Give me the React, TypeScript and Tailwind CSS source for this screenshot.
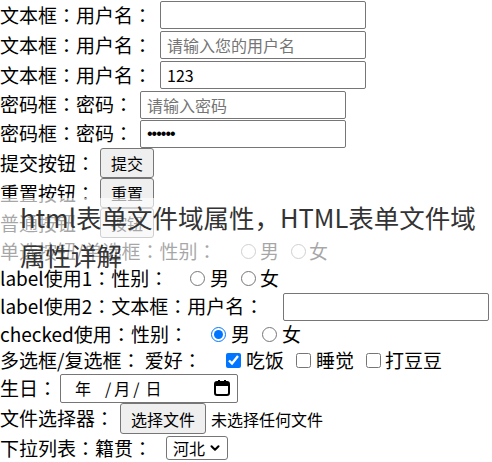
import { ChevronDown } from 'lucide-react';

const fontStack = '"Noto Sans CJK SC", "Noto Sans", sans-serif';

// full-width colon drawn centred, as in the reference font
function Label({ text, className }: { text: string; className: string }) {
  const parts = text.split('：');
  return (
    <span className={className}>
      {parts.map((p, i) => (
        <span key={i}>
          {p}
          {i < parts.length - 1 && <span style={{ fontFamily: '"Noto Sans CJK JP", sans-serif' }}>：</span>}
        </span>
      ))}
    </span>
  );
}

function CalendarIcon() {
  return (
    <svg width="18" height="18" viewBox="0 0 18 18" fill="none">
      <rect x="2" y="3" width="14" height="13" rx="2" stroke="#000" strokeWidth="2" />
      <rect x="2" y="3" width="14" height="4" fill="#000" />
      <rect x="5" y="1" width="2" height="3" fill="#000" />
      <rect x="11" y="1" width="2" height="3" fill="#000" />
    </svg>
  );
}

function Radio({ checked }: { checked?: boolean }) {
  return <input type="radio" defaultChecked={checked} className="m-0 h-[15px] w-[15px] shrink-0" />;
}

function Checkbox({ checked }: { checked?: boolean }) {
  return <input type="checkbox" defaultChecked={checked} className="m-0 h-[15px] w-[15px] shrink-0" />;
}

export default function App() {
  const textInput =
    'h-[28px] w-[206px] shrink-0 rounded-[2px] border border-[#767676] bg-white px-[6px] text-[16px] text-black outline-none placeholder:text-[#757575]';
  const button =
    'h-[30px] shrink-0 rounded-[3px] border border-[#767676] bg-[#efefef] px-[10px] text-[16px] text-black';

  return (
    <div
      className="relative h-[462px] w-[492px] overflow-hidden bg-white text-[19px] text-black"
      style={{ fontFamily: fontStack }}
    >
      {/* 文本框 */}
      <div className="flex h-[30px] items-center whitespace-nowrap">
        <Label className="w-[160px] shrink-0" text="文本框：用户名：" />
        <input type="text" className={textInput} />
      </div>
      <div className="flex h-[30px] items-center whitespace-nowrap">
        <Label className="w-[160px] shrink-0" text="文本框：用户名：" />
        <input type="text" placeholder="请输入您的用户名" className={textInput} />
      </div>
      <div className="flex h-[30px] items-center whitespace-nowrap">
        <Label className="w-[160px] shrink-0" text="文本框：用户名：" />
        <input type="text" defaultValue="123" className={textInput} />
      </div>

      {/* 密码框 */}
      <div className="flex h-[29px] items-center whitespace-nowrap">
        <Label className="w-[140px] shrink-0" text="密码框：密码：" />
        <input type="password" placeholder="请输入密码" className={textInput} />
      </div>
      <div className="flex h-[29px] items-center whitespace-nowrap">
        <Label className="w-[140px] shrink-0" text="密码框：密码：" />
        <input
          type="password"
          defaultValue="123456"
          className={textInput + ' font-["Liberation_Sans"] text-[15px] tracking-[-1px]'}
        />
      </div>

      {/* 按钮 */}
      <div className="flex h-[30px] items-center whitespace-nowrap">
        <Label className="w-[100px] shrink-0" text="提交按钮：" />
        <button className={button}>提交</button>
      </div>
      <div className="flex h-[30px] items-center whitespace-nowrap">
        <Label className="w-[100px] shrink-0" text="重置按钮：" />
        <button className={button}>重置</button>
      </div>
      <div className="flex h-[30px] items-center whitespace-nowrap">
        <Label className="w-[100px] shrink-0" text="普通按钮：" />
        <button className={button}>按钮</button>
      </div>

      {/* 单选 */}
      <div className="flex h-[27px] items-center whitespace-nowrap">
        <Label className="w-[241px] shrink-0" text="单选按钮/单选框：性别：" />
        <Radio />
        <span className="ml-[4px]">男</span>
        <span className="ml-[12px] flex items-center"><Radio /></span>
        <span className="ml-[3px]">女</span>
      </div>
      <div className="flex h-[27px] items-center whitespace-nowrap">
        <Label className="w-[190px] shrink-0" text="label使用1：性别：" />
        <Radio />
        <span className="ml-[5px]">男</span>
        <span className="ml-[12px] flex items-center"><Radio /></span>
        <span className="ml-[4px]">女</span>
      </div>
      <div className="flex h-[29px] items-center whitespace-nowrap">
        <Label className="w-[283px] shrink-0" text="label使用2：文本框：用户名：" />
        <input type="text" className={textInput + ' h-[27px]'} />
      </div>
      <div className="flex h-[27px] items-center whitespace-nowrap">
        <Label className="w-[211px] shrink-0" text="checked使用：性别：" />
        <Radio checked />
        <span className="ml-[5px]">男</span>
        <span className="ml-[12px] flex items-center"><Radio /></span>
        <span className="ml-[5px]">女</span>
      </div>

      {/* 复选框 */}
      <div className="flex h-[25px] items-center whitespace-nowrap">
        <Label className="w-[226px] shrink-0" text="多选框/复选框： 爱好：" />
        <Checkbox checked />
        <span className="ml-[5px]">吃饭</span>
        <span className="ml-[12px] flex items-center"><Checkbox /></span>
        <span className="ml-[5px]">睡觉</span>
        <span className="ml-[12px] flex items-center"><Checkbox /></span>
        <span className="ml-[4px]">打豆豆</span>
      </div>

      {/* 日期 */}
      <div className="flex h-[30px] items-center whitespace-nowrap">
        <Label className="w-[60px] shrink-0" text="生日：" />
        <div className="flex h-[29px] w-[178px] items-center rounded-[2px] border border-[#767676] pl-[14px] pr-[6px] text-[16px]">
          <span>年</span>
          <span className="ml-[14px]">/</span>
          <span className="ml-[3px]">月</span>
          <span className="ml-[3px]">/</span>
          <span className="ml-[6px]">日</span>
          <span className="ml-auto flex items-center">
            <CalendarIcon />
          </span>
        </div>
      </div>

      {/* 文件 */}
      <div className="flex h-[31px] items-center whitespace-nowrap">
        <Label className="w-[120px] shrink-0" text="文件选择器：" />
        <button className={button + ' h-[31px] px-[9px]'}>选择文件</button>
        <span className="ml-[5px] text-[16px]">未选择任何文件</span>
      </div>

      {/* 下拉列表 */}
      <div className="flex h-[28px] items-center whitespace-nowrap">
        <Label className="w-[166px] shrink-0" text="下拉列表：籍贯：" />
        <div className="flex h-[24px] w-[62px] items-center rounded-[3px] border border-[#767676] pl-[6px] text-[16px]">
          <span>河北</span>
          <ChevronDown className="ml-[3px]" size={14} strokeWidth={3.5} />
        </div>
      </div>

      {/* 标题浮层 */}
      <div className="absolute left-0 right-0 top-[198px] h-[68px] bg-white/65">
        <p className="pl-[20px] text-[25.5px] leading-[38px] text-[#333]">
          html表单文件域属性，HTML表单文件域
          <br />
          属性详解
        </p>
      </div>
    </div>
  );
}
